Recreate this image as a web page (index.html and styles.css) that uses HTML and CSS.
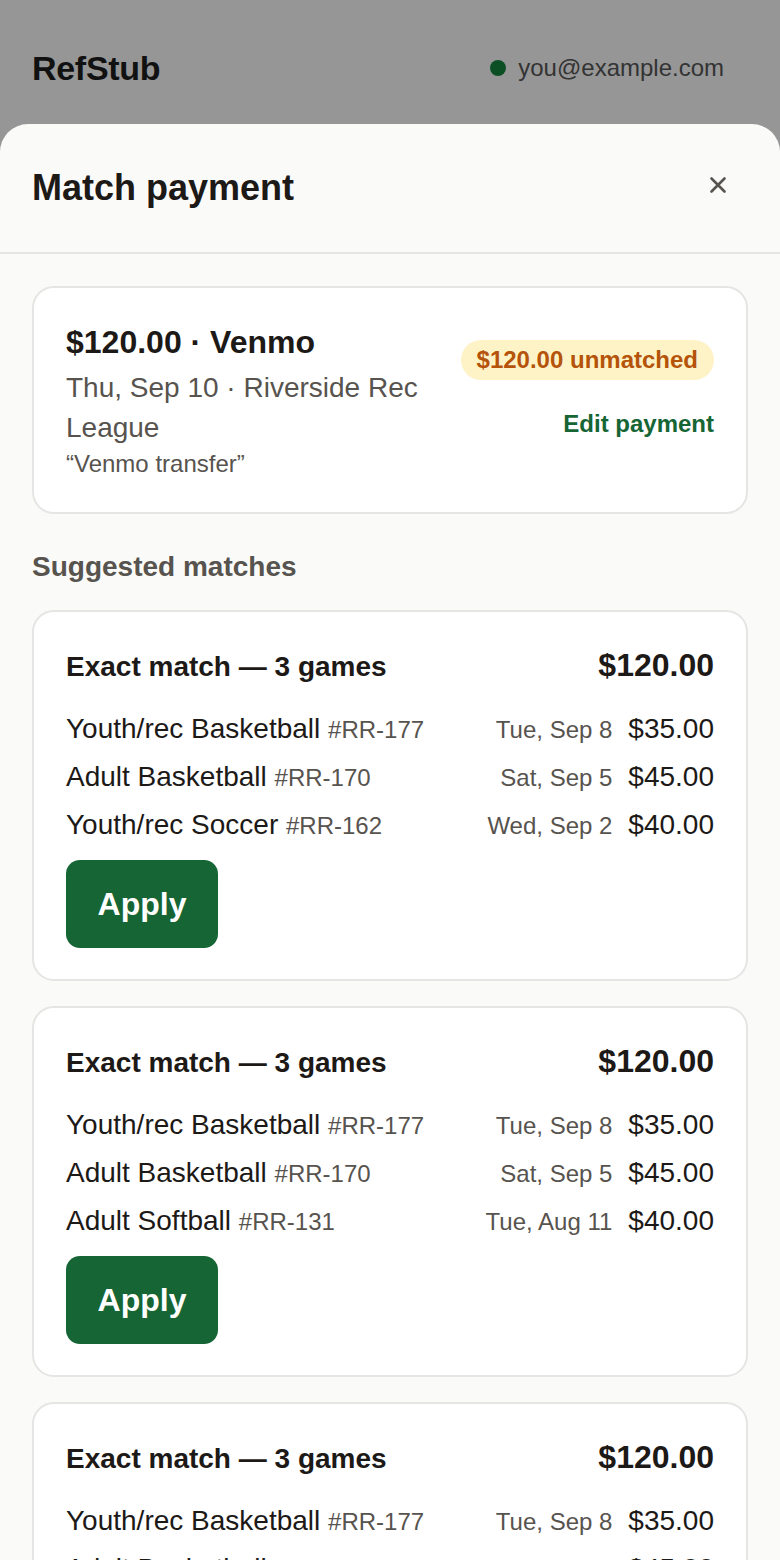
FILE: index.html
```html
<!DOCTYPE html>
<html lang="en">
<head>
    <meta charset="UTF-8">
    <meta name="viewport" content="width=device-width, initial-scale=1.0">
    <title>Match payment - RefStub</title>
    <link rel="stylesheet" href="styles.css">
</head>
<body>
    <header class="topbar">
        <div class="brand">RefStub</div>
        <div class="account"><span class="dot"></span>you@example.com</div>
    </header>

    <div class="sheet">
        <div class="sheet-head">
            <h1>Match payment</h1>
            <button class="close" aria-label="Close">
                <svg width="18" height="18" viewBox="0 0 18 18"><path d="M2.5 2.5L15.5 15.5M15.5 2.5L2.5 15.5" stroke="#57534e" stroke-width="2.6" stroke-linecap="round"/></svg>
            </button>
        </div>

        <div class="sheet-body">
            <div class="card payment">
                <div class="payment-info">
                    <div class="payment-title">$120.00 · Venmo</div>
                    <div class="payment-meta">Thu, Sep 10 · Riverside Rec League</div>
                    <div class="payment-note">“Venmo transfer”</div>
                </div>
                <div class="payment-side">
                    <span class="badge">$120.00 unmatched</span>
                    <a class="edit-link" href="#">Edit payment</a>
                </div>
            </div>

            <h2 class="section-title">Suggested matches</h2>

            <div class="card match">
                <div class="match-head">
                    <span class="match-label">Exact match — 3 games</span>
                    <span class="match-total">$120.00</span>
                </div>
                <div class="game"><span class="game-name">Youth/rec Basketball <span class="game-id">#RR-177</span></span><span class="game-date">Tue, Sep 8</span><span class="game-amt">$35.00</span></div>
                <div class="game"><span class="game-name">Adult Basketball <span class="game-id">#RR-170</span></span><span class="game-date">Sat, Sep 5</span><span class="game-amt">$45.00</span></div>
                <div class="game"><span class="game-name">Youth/rec Soccer <span class="game-id">#RR-162</span></span><span class="game-date">Wed, Sep 2</span><span class="game-amt">$40.00</span></div>
                <button class="apply">Apply</button>
            </div>

            <div class="card match">
                <div class="match-head">
                    <span class="match-label">Exact match — 3 games</span>
                    <span class="match-total">$120.00</span>
                </div>
                <div class="game"><span class="game-name">Youth/rec Basketball <span class="game-id">#RR-177</span></span><span class="game-date">Tue, Sep 8</span><span class="game-amt">$35.00</span></div>
                <div class="game"><span class="game-name">Adult Basketball <span class="game-id">#RR-170</span></span><span class="game-date">Sat, Sep 5</span><span class="game-amt">$45.00</span></div>
                <div class="game"><span class="game-name">Adult Softball <span class="game-id">#RR-131</span></span><span class="game-date">Tue, Aug 11</span><span class="game-amt">$40.00</span></div>
                <button class="apply">Apply</button>
            </div>

            <div class="card match">
                <div class="match-head">
                    <span class="match-label">Exact match — 3 games</span>
                    <span class="match-total">$120.00</span>
                </div>
                <div class="game"><span class="game-name">Youth/rec Basketball <span class="game-id">#RR-177</span></span><span class="game-date">Tue, Sep 8</span><span class="game-amt">$35.00</span></div>
                <div class="game"><span class="game-name">Adult Basketball <span class="game-id">#RR-170</span></span><span class="game-date">Sat, Sep 5</span><span class="game-amt">$45.00</span></div>
                <div class="game"><span class="game-name">Youth/rec Soccer <span class="game-id">#RR-162</span></span><span class="game-date">Wed, Sep 2</span><span class="game-amt">$40.00</span></div>
                <button class="apply">Apply</button>
            </div>
        </div>
    </div>
</body>
</html>
```

FILE: styles.css
```css
body {
    margin: 0;
    font-family: "Liberation Sans", Arial, sans-serif;
    background-color: #969696;
    color: #1c1917;
    height: 1560px;
    overflow: hidden;
}
.topbar {
    height: 124px;
    display: flex;
    align-items: center;
    justify-content: space-between;
    padding: 12px 56px 0 32px;
    box-sizing: border-box;
}
.brand {
    font-size: 34px;
    font-weight: bold;
    letter-spacing: -0.3px;
    color: #111;
}
.account {
    display: flex;
    align-items: center;
    gap: 12px;
    font-size: 24px;
    color: #333;
}
.dot {
    width: 16px;
    height: 16px;
    border-radius: 50%;
    background-color: #0d4f25;
}
.sheet {
    background-color: #fafaf9;
    border-radius: 28px 28px 0 0;
    min-height: 1436px;
}
.sheet-head {
    height: 128px;
    display: flex;
    align-items: center;
    justify-content: space-between;
    padding: 0 53px 0 32px;
    border-bottom: 2px solid #e7e5e4;
}
h1 {
    margin: 0;
    font-size: 36px;
}
.close {
    background: none;
    border: none;
    padding: 0;
    margin-top: -6px;
    display: flex;
    cursor: pointer;
}
.sheet-body {
    padding: 32px 32px;
}
.card {
    background-color: #fff;
    border: 2px solid #e7e5e4;
    border-radius: 22px;
    padding: 32px;
}
.payment {
    display: flex;
    justify-content: space-between;
    gap: 20px;
    padding-top: 34px;
    padding-bottom: 32px;
}
.payment-title {
    font-size: 32px;
    font-weight: bold;
    line-height: 40px;
}
.payment-meta {
    font-size: 28px;
    color: #57534e;
    line-height: 40px;
    margin-top: 6px;
    max-width: 370px;
}
.payment-note {
    font-size: 24px;
    color: #57534e;
    line-height: 32px;
}
.payment-side {
    display: flex;
    flex-direction: column;
    align-items: flex-end;
    padding-top: 18px;
    gap: 30px;
    flex-shrink: 0;
}
.badge {
    background-color: #fef3c7;
    color: #b45309;
    font-size: 24px;
    font-weight: bold;
    padding: 6px 16px;
    border-radius: 20px;
    line-height: 28px;
}
.edit-link {
    color: #166534;
    font-size: 24px;
    font-weight: bold;
    text-decoration: none;
}
.section-title {
    font-size: 28px;
    color: #57534e;
    margin: 37px 0 27px;
    line-height: 32px;
}
.match {
    margin-bottom: 25px;
    padding-top: 35px;
    padding-bottom: 31px;
}
.match-head {
    display: flex;
    justify-content: space-between;
    align-items: baseline;
    margin-bottom: 29px;
}
.match-label {
    font-size: 28px;
    font-weight: bold;
}
.match-total {
    font-size: 32px;
    font-weight: bold;
}
.game {
    display: flex;
    align-items: baseline;
    height: 48px;
    font-size: 28px;
}
.game-name {
    flex: 1;
}
.game-id {
    font-size: 24px;
    color: #57534e;
}
.game-date {
    font-size: 24px;
    color: #57534e;
    margin-right: 16px;
}
.apply {
    display: block;
    margin-top: 3px;
    background-color: #166534;
    color: #fff;
    border: none;
    border-radius: 14px;
    font-family: inherit;
    font-size: 32px;
    font-weight: bold;
    width: 152px;
    height: 88px;
    cursor: pointer;
}
```
